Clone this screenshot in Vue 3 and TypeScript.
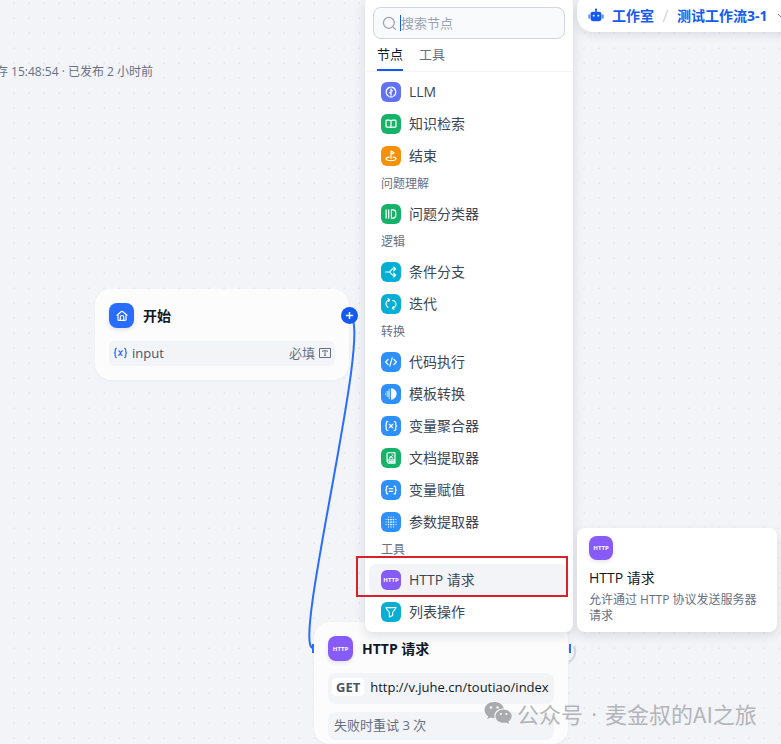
<script setup lang="ts">
import { ref } from 'vue'

type Tone = 'indigo' | 'green' | 'orange' | 'cyan' | 'blue' | 'violet'

interface BlockItem {
  id: string
  label: string
  tone: Tone
}

interface BlockGroup {
  title: string
  items: BlockItem[]
}

const keyword = ref('')
const activeTab = ref('节点')
const tabs: string[] = ['节点', '工具']
const activeBlock = ref('http')

const groups: BlockGroup[] = [
  {
    title: '',
    items: [
      { id: 'llm', label: 'LLM', tone: 'indigo' },
      { id: 'knowledge', label: '知识检索', tone: 'green' },
      { id: 'end', label: '结束', tone: 'orange' },
    ],
  },
  { title: '问题理解', items: [{ id: 'classifier', label: '问题分类器', tone: 'green' }] },
  {
    title: '逻辑',
    items: [
      { id: 'branch', label: '条件分支', tone: 'cyan' },
      { id: 'loop', label: '迭代', tone: 'cyan' },
    ],
  },
  {
    title: '转换',
    items: [
      { id: 'code', label: '代码执行', tone: 'blue' },
      { id: 'template', label: '模板转换', tone: 'blue' },
      { id: 'aggregate', label: '变量聚合器', tone: 'blue' },
      { id: 'document', label: '文档提取器', tone: 'green' },
      { id: 'assign', label: '变量赋值', tone: 'blue' },
      { id: 'parameter', label: '参数提取器', tone: 'blue' },
    ],
  },
  {
    title: '工具',
    items: [
      { id: 'http', label: 'HTTP 请求', tone: 'violet' },
      { id: 'list', label: '列表操作', tone: 'cyan' },
    ],
  },
]

/* Stroke outlines on a 14 x 14 grid */
const strokes: Record<string, string> = {
  llm: 'M6.2 1.3A5.8 5.8 0 0 0 4.2 12M7.8 1.3A5.8 5.8 0 0 1 9.800 12M5.600 12.700H8.400M7 3.400V10.800M7 4.600L8.600 5.600M7 8.800L5.200 7.600',
  knowledge: 'M7 3.2V11.2M7 3.2C6.4 2.6 5.6 2.4 4.6 2.4H2.1A.9.9 0 0 0 1.2 3.3V9.8A.9.9 0 0 0 2.1 10.7H4.8C5.8 10.7 6.5 10.8 7 11.2C7.5 10.8 8.2 10.7 9.2 10.7H11.9A.9.9 0 0 0 12.8 9.8V3.3A.9.9 0 0 0 11.9 2.4H9.4C8.4 2.4 7.6 2.6 7 3.2',
  end: 'M7 9.8V1.2L10.6 3.2L7 5.2M4.6 8.3C2.6 8.6 1.2 9.3 1.2 10.2C1.2 11.5 3.8 12.4 7 12.4S12.8 11.5 12.8 10.2C12.8 9.3 11.4 8.6 9.4 8.3',
  classifier: 'M1.3 2.2V11.8M4.3 2.2V11.8M7.5 2.2H9.4A3.2 3.2 0 0 1 12.6 5.4V8.6A3.2 3.2 0 0 1 9.4 11.8H7.5Z',
  branch: 'M.8 7H4.7C6.8 7 7.1 3.4 9.3 3.4H12.4M4.7 7C6.8 7 7.1 10.6 9.3 10.6H12.4M10.2 1.2L12.4 3.4L10.2 5.6M10.2 8.4L12.4 10.6L10.2 12.8',
  loop: 'M5.2 2H4.9A4.9 4.9 0 0 0 3.400 10.800M3.600.8L5.400 2L4.200 4M8.800 3.200A4.900 4.900 0 0 1 10.600 3.200A4.900 4.900 0 0 1 9.100 12H8.800M10.400 13.200L8.600 12L9.800 10',
  code: 'M3.6 4L.8 7L3.6 10M10.4 4L13.2 7L10.4 10M8.4 2.2L5.6 11.8',
  aggregate: 'M3.2 1.8H2.8A1.4 1.4 0 0 0 1.5 3.2V5.2C1.5 6.2 1.1 6.8.2 7C1.1 7.2 1.5 7.8 1.5 8.8V10.8A1.4 1.4 0 0 0 2.8 12.2H3.2M10.8 1.8H11.2A1.4 1.4 0 0 1 12.5 3.2V5.2C12.5 6.2 12.9 6.8 13.8 7C12.9 7.2 12.5 7.8 12.5 8.8V10.8A1.4 1.4 0 0 1 11.2 12.2H10.8M5 5L9 9M9 5L5 9',
  assign: 'M3.3 2.4H2.9A1.3 1.3 0 0 0 1.7 3.6V5.4C1.7 6.3 1.4 6.8.6 7C1.4 7.2 1.7 7.7 1.7 8.6V10.4A1.3 1.3 0 0 0 2.9 11.6H3.3M10.7 2.4H11.1A1.3 1.3 0 0 1 12.3 3.6V5.4C12.3 6.3 12.6 6.8 13.4 7C12.6 7.2 12.3 7.7 12.3 8.6V10.4A1.3 1.3 0 0 1 11.1 11.6H10.7M4.9 5.5H9.1M4.9 8.5H9.1',
  document: 'M2.4 10.8V2.4A1.5 1.5 0 0 1 3.9.9H11.6V13H4.3A1.9 1.9 0 0 1 4.3 9.3H11.4M5 11.2H11M5.2 7L7 5L8.6 6.8M8.8 3.6H9',
  list: 'M1.2 1.8H12.8C12.6 4.6 8.9 6 8.9 8V11L5.1 12.8V8C5.1 6 1.4 4.6 1.2 1.8Z',
}

const parameterDots: { x: number; y: number; r: number }[] = []
for (let row = 0; row < 5; row++) {
  for (let col = 0; col < 5; col++) {
    const x = 1.2 + col * 2.9
    const y = 1.2 + row * 2.9
    const distance = Math.hypot(x - 7, y - 7)
    if (distance < 7) parameterDots.push({ x, y, r: distance < 4.5 ? 1 : 0.7 })
  }
}
</script>

<template>
  <main class="canvas">
    <p class="save-state">存 15:48:54 · 已发布 2 小时前</p>

    <svg class="edges" aria-hidden="true">
      <path d="M349 316C376 316 291 648 313 648" />
      <path class="loose" d="M569 662C574 659 577 653 574 646" />
    </svg>

    <nav class="crumbs" aria-label="位置">
      <svg class="robot" viewBox="0 0 18 18" aria-hidden="true">
        <path d="M8.2 1.2h1.6v3H12.400a2.800 2.800 0 0 1 2.800 2.800v5.200A2.800 2.800 0 0 1 12.400 15H5.600a2.800 2.800 0 0 1-2.800-2.800V7A2.800 2.800 0 0 1 5.600 4.200h2.600zM.6 7.400h1.300v4.400H.6zM16.100 7.400h1.300v4.400h-1.300z" />
        <circle cx="6.4" cy="8.6" r="1.1" fill="#fff" />
        <circle cx="11.6" cy="8.6" r="1.1" fill="#fff" />
        <circle cx="9" cy="1.8" r="1.3" />
      </svg>
      <a href="#studio">工作室</a>
      <span class="slash">/</span>
      <a href="#workflow">测试工作流3-1</a>
      <svg class="chevron" viewBox="0 0 12 12" aria-hidden="true"><path d="M2 4L6 8L10 4" /></svg>
    </nav>

    <section class="node start-node">
      <header class="node-head">
        <span class="tile tile-node tone-start">
          <svg viewBox="0 0 14 14" class="line-icon" aria-hidden="true">
            <path d="M1.2 6.2L6.3 1.8Q7 1.2 7.7 1.8L12.8 6.2M2.3 5.6V11A1.2 1.2 0 0 0 3.5 12.2H10.5A1.2 1.2 0 0 0 11.7 11V5.6M5 12V8.4A2 2 0 0 1 9 8.4V12" />
          </svg>
        </span>
        <h2>开始</h2>
      </header>
      <div class="field-row">
        <svg class="var-icon" viewBox="0 0 16 14" aria-hidden="true">
          <path d="M4 2Q2.4 2 2.4 3.7V5.5Q2.4 7 1.2 7Q2.4 7 2.4 8.5V10.3Q2.4 12 4 12M12 2Q13.6 2 13.6 3.7V5.5Q13.6 7 14.8 7Q13.6 7 13.6 8.5V10.3Q13.6 12 12 12M5.7 5Q7 4.5 7.5 6L8.5 8.6Q9 9.8 10.2 9.2M10.6 4.8Q9.3 4.6 8.3 6.5L7.5 8Q6.6 9.7 5.3 9.3" />
        </svg>
        <span class="field-name">input</span>
        <span class="required">必填</span>
        <svg class="text-icon" viewBox="0 0 12 12" aria-hidden="true">
          <path d="M.5 1.5H11.5V10.5H.5ZM3.7 4.8V3.8H8.3V4.8M6 3.8V8.3M5 8.3H7" />
        </svg>
      </div>
      <button class="add-button" type="button" aria-label="添加节点">
        <svg viewBox="0 0 10 10" aria-hidden="true"><path d="M5 1V9M1 5H9" /></svg>
      </button>
    </section>

    <section class="node http-node">
      <header class="node-head">
        <span class="tile tile-node tone-violet"><span class="http-mark">HTTP</span></span>
        <h2>HTTP 请求</h2>
      </header>
      <div class="request-row">
        <span class="method">GET</span>
        <span class="url">http://v.juhe.cn/toutiao/index</span>
      </div>
      <div class="retry-row">失败时重试 3 次</div>
      <i class="port port-in"></i>
      <i class="port port-out"></i>
    </section>

    <aside class="picker">
      <div class="search">
        <svg viewBox="0 0 16 16" aria-hidden="true"><circle cx="7.3" cy="7.3" r="5.8" /><path d="M11.6 11.6L14.6 14.6" /></svg>
        <i class="caret"></i>
        <input v-model="keyword" type="text" placeholder="搜索节点" aria-label="搜索节点" />
      </div>
      <div class="tabs" role="tablist">
        <button
          v-for="tab in tabs"
          :key="tab"
          type="button"
          role="tab"
          :aria-selected="tab === activeTab"
          :class="['tab', { active: tab === activeTab }]"
          @click="activeTab = tab"
        >{{ tab }}</button>
      </div>
      <div class="groups">
        <section v-for="group in groups" :key="group.title">
          <h3 v-if="group.title">{{ group.title }}</h3>
          <button
            v-for="item in group.items"
            :key="item.id"
            type="button"
            :class="['block', { active: item.id === activeBlock }]"
            @mouseenter="activeBlock = item.id"
          >
            <span :class="['tile', 'tone-' + item.tone]">
              <span v-if="item.id === 'http'" class="http-mark">HTTP</span>
              <svg v-else-if="item.id === 'parameter'" class="solid-icon" viewBox="0 0 14 14" aria-hidden="true">
                <circle v-for="(dot, i) in parameterDots" :key="i" :cx="dot.x" :cy="dot.y" :r="dot.r" />
              </svg>
              <svg v-else-if="item.id === 'template'" class="solid-icon" viewBox="0 0 14 14" aria-hidden="true">
                <path d="M7 .4A6.6 6.6 0 0 1 7 13.6Z" />
                <path d="M4 1.4H6V3H4ZM1.8 3.8H6V5.4H1.8ZM0 6.2H1.6V7.8H0ZM2.4 6.2H6V7.8H2.4ZM1.8 8.6H6V10.2H1.8ZM4 11H6V12.6H4Z" opacity=".75" />
              </svg>
              <svg v-else class="line-icon" viewBox="0 0 14 14" aria-hidden="true"><path :d="strokes[item.id]" /></svg>
            </span>
            <span>{{ item.label }}</span>
          </button>
        </section>
      </div>
    </aside>

    <div class="highlight"></div>

    <aside class="tip" role="tooltip">
      <span class="tile tile-tip tone-violet"><span class="http-mark">HTTP</span></span>
      <h4>HTTP 请求</h4>
      <p>允许通过 HTTP 协议发送服务器请求</p>
    </aside>

    <div class="watermark">
      <svg viewBox="0 0 28 24" aria-hidden="true">
        <path fill-rule="evenodd" d="M10.2 1C4.8 1 .5 4.5.5 9c0 2.6 1.4 4.8 3.6 6.3L3.2 18l3.2-1.6c1.2.4 2.4.6 3.8.6h.5A7 7 0 0 1 10.300 15c0-4.300 4-7.600 9-7.600h.5C18.900 3.700 15 1 10.200 1ZM7 5.200a1.300 1.300 0 1 1 0 2.600 1.300 1.300 0 0 1 0-2.600Zm6.600 0a1.300 1.300 0 1 1 0 2.600 1.300 1.300 0 0 1 0-2.600Z" />
        <path fill-rule="evenodd" d="M27.7 15.2c0-3.7-3.7-6.6-8.1-6.6s-8.1 2.9-8.1 6.6 3.7 6.6 8.1 6.6c1 0 1.9-.1 2.7-.4l2.8 1.5-.7-2.4c2-1.2 3.3-3.1 3.3-5.3Zm-10.8-3.3a1.1 1.1 0 1 1 0 2.2 1.1 1.1 0 0 1 0-2.2Zm5.4 0a1.1 1.1 0 1 1 0 2.2 1.1 1.1 0 0 1 0-2.2Z" />
      </svg>
      <span>公众号</span>
      <span class="middot">·</span>
      <span>麦金叔的AI之旅</span>
    </div>
  </main>
</template>

<style>
body {
  margin: 0;
}
</style>

<style scoped>
* {
  box-sizing: border-box;
}

.canvas {
  position: relative;
  min-height: 100vh;
  overflow: hidden;
  background-color: #f2f4f8;
  background-image: radial-gradient(circle, #e6e9ee 1px, transparent 1px);
  background-size: 15px 15px;
  background-position: 7px 11px;
  color: #3b4656;
  font-family: "Open Sans", "Noto Sans CJK SC", sans-serif;
  font-size: 14px;
  line-height: 20px;
}

h2,
h3,
h4,
p {
  margin: 0;
}

button,
input {
  padding: 0;
  border: 0;
  background: none;
  color: inherit;
  font: inherit;
}

.save-state {
  position: absolute;
  top: 62px;
  left: 0;
  display: flex;
  justify-content: flex-end;
  width: 153px;
  color: #676f83;
  font-size: 12px;
  white-space: nowrap;
}

.edges {
  position: absolute;
  inset: 0;
  width: 100%;
  height: 100%;
  fill: none;
  stroke: #296dff;
  stroke-width: 2;
}

.edges .loose {
  stroke: #d0d5dd;
}

.crumbs {
  position: absolute;
  top: -8px;
  left: 577px;
  right: -16px;
  display: flex;
  align-items: center;
  height: 40px;
  padding: 8px 0 0 11px;
  border-radius: 16px;
  background: #fff;
  box-shadow: 0 3px 8px rgba(16, 24, 40, 0.1);
  font-size: 14px;
  font-weight: 700;
  white-space: nowrap;
}

.crumbs a {
  color: #155aef;
  text-decoration: none;
}

.robot {
  width: 16px;
  height: 16px;
  margin-right: 8px;
  fill: #155aef;
}

.slash {
  width: 23px;
  color: #d0d5dd;
  font-size: 16px;
  font-weight: 400;
  text-align: center;
}

.chevron {
  flex: none;
  width: 12px;
  height: 12px;
  margin-left: 8px;
  fill: none;
  stroke: #5c8af5;
}

.node {
  position: absolute;
  width: 254px;
  padding: 14px;
  border-radius: 16px;
  background: #fcfcfd;
  box-shadow: 0 1px 3px rgba(16, 24, 40, 0.04);
}

.start-node {
  top: 289px;
  left: 95px;
}

.http-node {
  top: 622px;
  left: 314px;
  padding-bottom: 4px;
}

.node-head {
  display: flex;
  align-items: center;
  gap: 9px;
}

.node-head h2 {
  color: #101828;
  font-size: 14px;
  font-weight: 700;
}

.tile {
  display: flex;
  flex: none;
  align-items: center;
  justify-content: center;
  width: 20px;
  height: 20px;
  border-radius: 6px;
  color: #fff;
}

.tile svg {
  width: 12px;
  height: 12px;
}

.tile-node {
  width: 25px;
  height: 25px;
  border-radius: 8px;
  box-shadow: 0 2px 4px rgba(16, 24, 40, 0.1);
}

.tile-tip {
  width: 24px;
  height: 24px;
  border-radius: 8px;
  box-shadow: 0 2px 4px rgba(16, 24, 40, 0.1);
}

.line-icon {
  fill: none;
  stroke: currentColor;
  stroke-width: 1.4;
  stroke-linecap: round;
  stroke-linejoin: round;
}

.solid-icon {
  fill: currentColor;
}

.http-mark {
  font-family: "Open Sans", sans-serif;
  font-size: 6px;
  font-weight: 700;
  line-height: 8px;
}

.tone-start { background: #296dff; }
.tone-indigo { background: #6172f3; }
.tone-green { background: #17b26a; }
.tone-orange { background: #f79009; }
.tone-cyan { background: #06aed4; }
.tone-blue { background: #2e90fa; }
.tone-violet { background: #875bf7; }

.field-row {
  display: flex;
  align-items: center;
  height: 25px;
  margin-top: 13px;
  padding: 0 4px 2px;
  border-radius: 6px;
  background: #f2f4f7;
  color: #495464;
}

.var-icon {
  width: 15px;
  height: 14px;
  fill: none;
  stroke: #296dff;
  stroke-width: 1.3;
}

.field-name {
  flex: 1;
  padding-left: 4px;
  font-size: 13px;
}

.required {
  color: #676f83;
  font-size: 13px;
}

.text-icon {
  width: 12px;
  height: 12px;
  margin-left: 4px;
  fill: none;
  stroke: #676f83;
}

.add-button {
  position: absolute;
  top: 18px;
  right: -9px;
  display: flex;
  align-items: center;
  justify-content: center;
  width: 17px;
  height: 17px;
  border-radius: 50%;
  background: #155aef;
}

.add-button svg {
  width: 9px;
  height: 9px;
  stroke: #fff;
  stroke-width: 1.6;
}

.request-row {
  display: flex;
  align-items: center;
  gap: 6px;
  height: 31px;
  margin-top: 12px;
  padding: 0 4px 4px;
  border-radius: 8px;
  background: #f2f4f7;
  white-space: nowrap;
}

.method {
  padding: 0 4px;
  border-radius: 4px;
  background: #fff;
  color: #495464;
  font-size: 13px;
  font-weight: 700;
  line-height: 18px;
}

.url {
  color: #101828;
  font-size: 13px;
}

.retry-row {
  height: 28px;
  margin-top: 8px;
  padding: 0 6px;
  border-radius: 8px;
  background: #f2f4f7;
  color: #676f83;
  font-size: 13px;
  line-height: 27px;
}

.port {
  position: absolute;
  top: 22px;
  width: 2px;
  height: 9px;
  background: #296dff;
}

.port-in {
  left: -2px;
}

.port-out {
  right: -3px;
}

.picker {
  position: absolute;
  top: -4px;
  left: 365px;
  width: 208px;
  padding-top: 11px;
  border-radius: 8px;
  background: #fff;
  box-shadow: 0 4px 12px rgba(16, 24, 40, 0.12);
}

.search {
  display: flex;
  align-items: center;
  height: 32px;
  margin: 0 8px;
  padding: 0 8px;
  border: 1px solid #d0d5dd;
  border-radius: 8px;
  background: #f9fafb;
}

.search svg {
  flex: none;
  width: 15px;
  height: 15px;
  fill: none;
  stroke: #98a2b3;
  stroke-width: 1.3;
}

.search input {
  width: 100%;
  min-width: 0;
  outline: 0;
  font-size: 13px;
}

.search input::placeholder {
  color: #98a2b3;
  opacity: 1;
}

.caret {
  flex: none;
  width: 1px;
  height: 16px;
  margin-left: 3px;
  background: #155aef;
}

.tabs {
  display: flex;
  gap: 16px;
  height: 33px;
  padding: 0 12px;
  border-bottom: 1px solid #f2f4f7;
}

.tab {
  border-bottom: 2px solid transparent;
  color: #676f83;
  font-size: 13px;
  line-height: 30px;
}

.tab.active {
  border-color: #155aef;
  color: #101828;
}

.groups {
  padding: 4px;
}

.groups h3 {
  padding: 0 12px 2px;
  color: #676f83;
  font-size: 12px;
  font-weight: 400;
  line-height: 24px;
}

.block {
  display: flex;
  align-items: center;
  gap: 8px;
  width: 100%;
  height: 32px;
  padding: 0 12px;
  border-radius: 8px;
  text-align: left;
}

.block.active {
  background: #f2f4f7;
}

.highlight {
  position: absolute;
  top: 556px;
  left: 356px;
  width: 212px;
  height: 41px;
  border: 2px solid #d7222b;
  pointer-events: none;
}

.tip {
  position: absolute;
  top: 528px;
  left: 577px;
  width: 200px;
  padding: 8px 12px;
  border-radius: 8px;
  background: #fff;
  box-shadow: 0 4px 10px rgba(16, 24, 40, 0.1);
}

.tip h4 {
  margin-top: 8px;
  color: #101828;
  font-size: 14px;
  font-weight: 400;
}

.tip p {
  margin-top: 4px;
  color: #676f83;
  font-size: 12px;
  line-height: 16px;
}

.watermark {
  position: absolute;
  top: 699px;
  left: 484px;
  display: flex;
  align-items: center;
  color: #b3b5b8;
  font-family: "Noto Sans CJK SC", sans-serif;
  font-size: 22px;
  line-height: 28px;
  white-space: nowrap;
}

.watermark svg {
  width: 28px;
  height: 24px;
  margin-right: 5px;
  fill: #a9abae;
}

.middot {
  width: 22px;
  font-family: "Open Sans", sans-serif;
  text-align: center;
}
</style>
